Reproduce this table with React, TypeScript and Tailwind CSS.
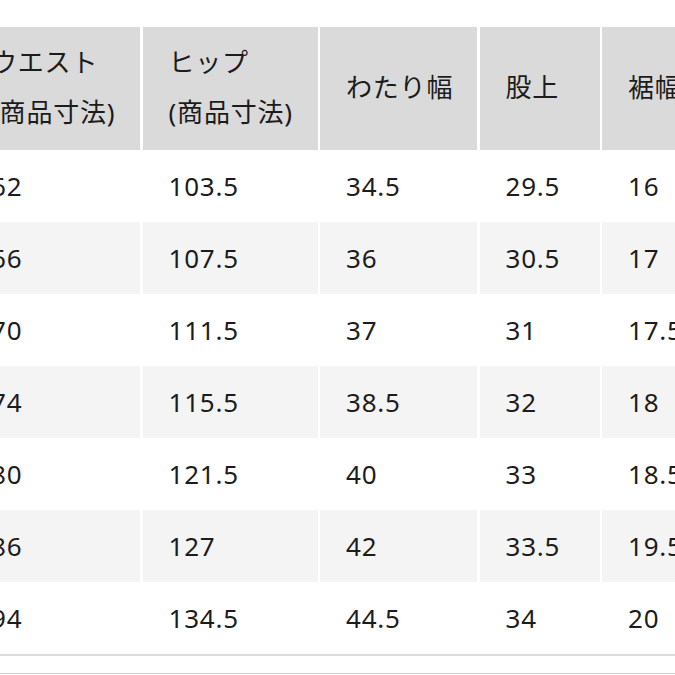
const headers: string[][] = [
  ['ウエスト', '(商品寸法)'],
  ['ヒップ', '(商品寸法)'],
  ['わたり幅'],
  ['股上'],
  ['裾幅'],
]

const rows = [
  ['62', '103.5', '34.5', '29.5', '16'],
  ['66', '107.5', '36', '30.5', '17'],
  ['70', '111.5', '37', '31', '17.5'],
  ['74', '115.5', '38.5', '32', '18'],
  ['80', '121.5', '40', '33', '18.5'],
  ['86', '127', '42', '33.5', '19.5'],
  ['94', '134.5', '44.5', '34', '20'],
]

const widths = ['w-[175px]', 'w-[175px]', 'w-[157px]', 'w-[120px]', 'w-[160px]']

const App = () => {
  return (
    <div
      className="w-[675px] h-[675px] overflow-hidden bg-white pt-[27px] text-[#1c1c1c] text-[26px] tracking-[0.8px]"
      style={{ fontFamily: '"Noto Sans", "Noto Sans CJK JP", sans-serif' }}
    >
      <div className="ml-[-35px] flex flex-col">
        {/* Header */}
        <div className="flex gap-[2.5px] h-[123px]">
          {headers.map((h, i) => (
            <div
              key={i}
              className={`${widths[i]} shrink-0 bg-[#dadada] pl-[26px] pb-[4px] flex flex-col justify-center leading-[50px]`}
            >
              {h.map((line, j) => (
                <div key={j} className="whitespace-nowrap">{line}</div>
              ))}
            </div>
          ))}
        </div>

        {/* Rows */}
        {rows.map((row, r) => (
          <div key={r} className="flex gap-[2.5px] h-[72px]">
            {row.map((v, i) => (
              <div
                key={i}
                className={`${widths[i]} shrink-0 pl-[26px] flex items-center ${
                  r % 2 === 1 ? 'bg-[#f4f4f4]' : 'bg-white'
                }`}
              >
                {v}
              </div>
            ))}
          </div>
        ))}

        {/* Bottom lines */}
        <div className="h-[2px] bg-[#dcdcdc] w-[820px]" />
        <div className="h-[17px]" />
        <div className="h-[1px] bg-[#cfcfcf] w-[820px]" />
      </div>
    </div>
  )
}

export default App
